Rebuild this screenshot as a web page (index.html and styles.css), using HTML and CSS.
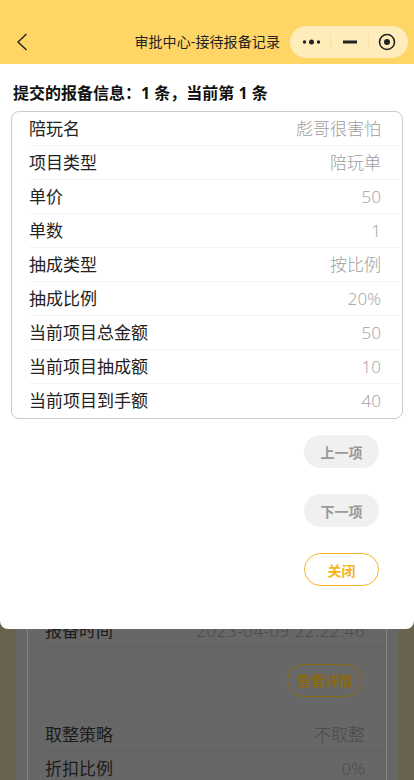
FILE: index.html
```html
<!DOCTYPE html>
<html lang="zh-CN">
<head>
    <meta charset="UTF-8">
    <meta name="viewport" content="width=device-width, initial-scale=1.0">
    <title>审批中心-接待报备记录</title>
    <link rel="stylesheet" href="styles.css">
</head>
<body>
    <div class="page">
        <!-- 顶部导航 -->
        <header class="nav">
            <svg class="nav-back" width="12" height="18" viewBox="0 0 12 18">
                <path d="M10.5 1 L2 9 L10.5 17" fill="none" stroke="#222" stroke-width="1.4"/>
            </svg>
            <span class="nav-title">审批中心-接待报备记录</span>
            <div class="capsule">
                <div class="capsule-item capsule-more">
                    <svg width="20" height="8" viewBox="0 0 20 8">
                        <circle cx="2.5" cy="4" r="1.7" fill="#222"/>
                        <circle cx="9.5" cy="4" r="2.5" fill="#222"/>
                        <circle cx="16.5" cy="4" r="1.7" fill="#222"/>
                    </svg>
                </div>
                <div class="capsule-item capsule-min">
                    <svg width="14" height="4" viewBox="0 0 14 4">
                        <rect x="0" y="0.5" width="14" height="3" fill="#222"/>
                    </svg>
                </div>
                <div class="capsule-item capsule-home">
                    <svg width="18" height="18" viewBox="0 0 18 18">
                        <circle cx="9" cy="9" r="7.5" fill="none" stroke="#222" stroke-width="1.6"/>
                        <circle cx="9" cy="9" r="3" fill="#222"/>
                    </svg>
                </div>
            </div>
        </header>

        <!-- 遮罩下面的页面 -->
        <div class="behind">
            <div class="behind-card">
                <div class="row row-dark"><span>报备时间</span><span class="value value-date">2023-04-09 22:22:46</span></div>
                <div class="behind-action"><span class="detail-btn">查看详情</span></div>
                <div class="row row-dark"><span>取整策略</span><span class="value">不取整</span></div>
                <div class="row row-dark"><span>折扣比例</span><span class="value">0%</span></div>
            </div>
        </div>

        <!-- 弹窗 -->
        <section class="sheet">
            <h2 class="sheet-title">提交的报备信息：1 条，当前第 1 条</h2>
            <div class="info-card">
                <div class="row"><span>陪玩名</span><span class="value">彪哥很害怕</span></div>
                <div class="row"><span>项目类型</span><span class="value">陪玩单</span></div>
                <div class="row"><span>单价</span><span class="value">50</span></div>
                <div class="row"><span>单数</span><span class="value">1</span></div>
                <div class="row"><span>抽成类型</span><span class="value">按比例</span></div>
                <div class="row"><span>抽成比例</span><span class="value">20%</span></div>
                <div class="row"><span>当前项目总金额</span><span class="value">50</span></div>
                <div class="row"><span>当前项目抽成额</span><span class="value">10</span></div>
                <div class="row"><span>当前项目到手额</span><span class="value">40</span></div>
            </div>
            <div class="actions">
                <button class="btn">上一项</button>
                <button class="btn">下一项</button>
                <button class="btn btn-close">关闭</button>
            </div>
        </section>
    </div>
</body>
</html>
```

FILE: styles.css
```css
* {
    box-sizing: border-box;
}

html, body {
    margin: 0;
    padding: 0;
}

body {
    font-family: "Open Sans", "Noto Sans CJK SC", sans-serif;
    color: #222;
}

.page {
    position: relative;
    width: 414px;
    height: 780px;
    overflow: hidden;
    background: #67634f;
}

.nav {
    position: relative;
    z-index: 2;
    height: 64px;
    background: #ffd666;
    display: flex;
    align-items: center;
    padding: 26px 6px 6px 16px;
}

.nav-back {
    flex: none;
}

.nav-title {
    margin-left: auto;
    margin-right: 10px;
    font-size: 14px;
    line-height: 18px;
    letter-spacing: 0.1px;
    color: #222;
}

.capsule {
    display: flex;
    align-items: center;
    width: 118px;
    height: 32px;
    border-radius: 16px;
    background: #feedbb;
}

.capsule-item {
    height: 16px;
    display: flex;
    align-items: center;
    justify-content: center;
    border-left: 1px solid #f8e3a6;
}

.capsule-more {
    width: 40px;
    padding-left: 4px;
    border-left: none;
}

.capsule-min {
    width: 38px;
}

.capsule-home {
    width: 40px;
    padding-right: 3px;
}

.behind {
    position: absolute;
    top: 0;
    left: 16px;
    right: 16px;
    bottom: 0;
    background: #676767;
    padding: 613px 11px 0;
}

.behind-card {
    border: 1px solid #858585;
    border-bottom: none;
    height: 200px;
}

.behind-action {
    display: flex;
    justify-content: flex-end;
    padding: 16px 24px 21px 0;
}

.detail-btn {
    width: 75px;
    height: 33px;
    border: 1px solid #8a6a10;
    border-radius: 16.5px;
    color: #8a6a10;
    font-size: 14px;
    font-weight: 700;
    line-height: 31px;
    text-align: center;
}

.row {
    margin-left: 17px;
    height: 34px;
    padding: 0 21px 0 0;
    display: flex;
    align-items: center;
    justify-content: space-between;
    border-bottom: 1px solid #f4f4f4;
    font-size: 17px;
    line-height: 22px;
    color: #222;
}

.row:last-child {
    border-bottom: none;
}

.value {
    color: #9e9e9e;
    font-weight: 300;
}

.row-dark {
    color: #1c1c1c;
    border-bottom-color: #626262;
}

.row-dark .value {
    color: #4a4a4a;
}

.row-dark .value-date {
    letter-spacing: 0.5px;
}

.sheet {
    position: relative;
    z-index: 1;
    height: 565px;
    background: #fff;
    border-radius: 0 0 8px 8px;
    padding: 18px 11px 0;
}

.sheet-title {
    margin: 0 0 7px 2px;
    font-size: 16px;
    line-height: 22px;
    font-weight: 700;
    color: #111;
}

.info-card {
    height: 308px;
    border: 1px solid #ccc;
    border-radius: 8px;
    overflow: hidden;
}

.actions {
    display: flex;
    flex-direction: column;
    align-items: flex-end;
    gap: 26px;
    padding: 16px 24px 0 0;
}

.btn {
    width: 75px;
    height: 33px;
    border: none;
    border-radius: 16.5px;
    background: #f0f0f0;
    color: #999;
    font-family: inherit;
    font-size: 14px;
    font-weight: 700;
    padding: 0;
}

.btn-close {
    background: #fff;
    border: 1px solid #f5b61a;
    color: #f5b61a;
}
```
